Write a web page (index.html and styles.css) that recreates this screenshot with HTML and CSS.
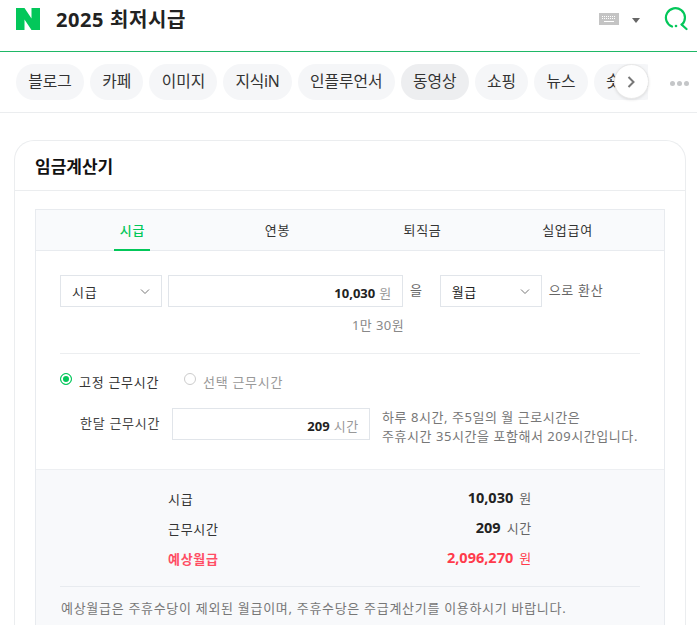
FILE: index.html
```html
<!DOCTYPE html>
<html lang="ko">

<head>
    <meta charset="utf-8" />
    <title>2025 최저시급</title>
    <link rel="stylesheet" href="styles.css">
</head>

<body>
    <!-- 검색창 -->
    <header class="search-bar">
        <svg class="logo" width="24" height="22" viewBox="0 0 24 22">
            <path fill="#03c75a" d="M0 0h8.500l7 10.500V0H24v22h-8.500l-7-10.500V22H0z" />
        </svg>
        <h1 class="query">2025 최저시급</h1>
        <svg class="kbd" width="20" height="12" viewBox="0 0 20 12">
            <rect width="20" height="12" fill="#c4c4c4" />
            <path stroke="#fff" stroke-width="1" stroke-dasharray="1 1" d="M3 3.500h14M3 5.500h14" />
            <path stroke="#fff" stroke-width="1" d="M5 8.500h10" />
        </svg>
        <span class="caret"></span>
        <svg class="search" width="24" height="24" viewBox="0 0 24 24" fill="none" stroke="#03c75a">
            <path stroke-width="2.200" stroke-linecap="round" d="M8 19.500A9.500 9.500 0 1 1 18 17.500" />
            <path stroke-width="2.200" stroke-linecap="round" d="M17.500 17.500l5 4.500" />
            <circle cx="12" cy="19" r="1.300" fill="#03c75a" stroke="none" />
        </svg>
    </header>

    <!-- 탭 메뉴 -->
    <nav class="chip-bar">
        <div class="chips">
            <a class="chip">블로그</a>
            <a class="chip">카페</a>
            <a class="chip">이미지</a>
            <a class="chip chip-narrow">지식iN</a>
            <a class="chip">인플루언서</a>
            <a class="chip chip-hover">동영상</a>
            <a class="chip">쇼핑</a>
            <a class="chip">뉴스</a>
            <a class="chip">숏텐츠</a>
        </div>
        <button class="chip-next">
            <svg width="9" height="12" viewBox="0 0 9 12" fill="none" stroke="#777" stroke-width="2">
                <path d="M1.500 1l5 5-5 5" />
            </svg>
        </button>
        <div class="more"><i></i><i></i><i></i></div>
    </nav>

    <!-- 계산기 -->
    <section class="card">
        <h2 class="card-title">임금계산기</h2>
        <div class="card-body">
            <div class="calc">
                <ul class="tabs">
                    <li class="tab active"><span>시급</span></li>
                    <li class="tab"><span>연봉</span></li>
                    <li class="tab"><span>퇴직금</span></li>
                    <li class="tab"><span>실업급여</span></li>
                </ul>

                <div class="form">
                    <div class="convert-row">
                        <div class="select select-from">시급
                            <svg width="10" height="6" viewBox="0 0 10 6" fill="none" stroke="#777"><path d="M1 .5l4 4 4-4" /></svg>
                        </div>
                        <div class="field field-wage"><b>10,030</b> <span>원</span></div>
                        <span class="word word-eul">을</span>
                        <div class="select select-to">월급
                            <svg width="10" height="6" viewBox="0 0 10 6" fill="none" stroke="#777"><path d="M1 .5l4 4 4-4" /></svg>
                        </div>
                        <span class="word">으로 환산</span>
                    </div>
                    <p class="korean-won">1만 30원</p>

                    <div class="radios">
                        <label class="radio on"><i></i>고정 근무시간</label>
                        <label class="radio"><i></i>선택 근무시간</label>
                    </div>

                    <div class="hours-row">
                        <span class="hours-label">한달 근무시간</span>
                        <div class="field field-hours"><b>209</b> <span>시간</span></div>
                        <p class="hours-help">하루 8시간, 주5일의 월 근로시간은<br>주휴시간 35시간을 포함해서 209시간입니다.</p>
                    </div>
                </div>

                <div class="summary">
                    <dl class="result">
                        <div class="result-row">
                            <dt>시급</dt>
                            <dd><b>10,030</b> 원</dd>
                        </div>
                        <div class="result-row">
                            <dt>근무시간</dt>
                            <dd><b>209</b> 시간</dd>
                        </div>
                        <div class="result-row total">
                            <dt>예상월급</dt>
                            <dd><b>2,096,270</b> 원</dd>
                        </div>
                    </dl>
                    <p class="note">예상월급은 주휴수당이 제외된 월급이며, 주휴수당은 주급계산기를 이용하시기 바랍니다.</p>
                </div>
            </div>
        </div>
    </section>
</body>
</html>
```

FILE: styles.css
```css
* {
    box-sizing: border-box;
}

html,
body {
    height: 625px;
    overflow: hidden;
}

body {
    margin: 0;
    background: #fff;
    color: #222;
    font-family: "Noto Sans", "Noto Sans CJK KR", sans-serif;
    font-size: 13px;
    letter-spacing: .7px;
}

b {
    letter-spacing: 0;
}

h1,
h2,
p,
ul,
dl,
dd {
    margin: 0;
    padding: 0;
}

ul {
    list-style: none;
}

/* 검색창 */
.search-bar {
    display: flex;
    align-items: center;
    height: 52px;
    padding: 0 9px 13px 16px;
    border-bottom: 1px solid #1fb866;
}

.logo {
    flex: none;
}

.query {
    flex: 1;
    margin: 2px 0 0 16px;
    font-size: 20px;
    font-weight: 700;
    letter-spacing: .6px;
    line-height: 26px;
    color: #222;
}

.caret {
    width: 0;
    height: 0;
    margin: 3px 24px 0 13px;
    border-top: 5px solid #666;
    border-left: 4px solid transparent;
    border-right: 4px solid transparent;
}

/* 탭 메뉴 */
.chip-bar {
    position: relative;
    height: 61px;
    padding: 12px 0 0 16px;
    border-bottom: 1px solid #ebedef;
    overflow: hidden;
}

.chips {
    display: flex;
    gap: 6px;
    width: 632px;
    overflow: hidden;
}

.chip {
    flex: none;
    height: 36px;
    padding: 0 12.200px;
    border-radius: 18px;
    background: #f5f6f8;
    font-size: 15.800px;
    letter-spacing: 0;
    line-height: 35px;
    color: #333;
}

.chip-narrow {
    letter-spacing: -.3px;
}

.chip-hover {
    background: #edeef0;
}

.chip-next {
    position: absolute;
    left: 614px;
    top: 12px;
    display: flex;
    align-items: center;
    justify-content: center;
    width: 35px;
    height: 35px;
    padding: 0;
    border: 1px solid #e8e8e8;
    border-radius: 50%;
    background: #fff;
    box-shadow: 0 1px 3px rgba(0, 0, 0, .1);
}

.more {
    position: absolute;
    left: 670px;
    top: 29px;
    display: flex;
    gap: 2px;
}

.more i {
    width: 5px;
    height: 5px;
    border-radius: 50%;
    background: #c4c6c8;
}

/* 계산기 */
.card {
    margin: 27px 11px 0 14px;
    border: 1px solid #ebedef;
    border-bottom: 0;
    border-radius: 20px 20px 0 0;
}

.card-title {
    height: 50px;
    padding: 1px 0 0 20px;
    border-bottom: 1px solid #ebedef;
    font-size: 17px;
    font-weight: 700;
    letter-spacing: 0;
    line-height: 50px;
    color: #111;
}

.card-body {
    padding: 18px 20px 0;
}

.calc {
    border: 1px solid #e8ebef;
    border-bottom: 0;
}

.tabs {
    display: flex;
    height: 41px;
    padding: 0 24px;
    background: #f9fafc;
    border-bottom: 1px solid #e8ebef;
}

.tab {
    flex: 1;
    text-align: center;
    line-height: 40px;
    color: #333;
}

.tab span {
    display: inline-block;
    height: 41px;
}

.tab.active span {
    width: 36px;
    margin-right: 1px;
    border-bottom: 2px solid #03c75a;
    color: #03c75a;
    font-weight: 500;
    text-indent: 1px;
}

.form {
    padding: 24px 24px 23px;
}

.convert-row {
    display: flex;
    align-items: flex-start;
}

.select {
    display: flex;
    align-items: center;
    justify-content: space-between;
    width: 102px;
    height: 32px;
    padding: 0 11px;
    border: 1px solid #e1e5ea;
    color: #333;
}

.select svg {
    margin-top: 1px;
}

.select-to {
    color: #222;
}

.field {
    height: 32px;
    border: 1px solid #e1e5ea;
    text-align: right;
    line-height: 34px;
    color: #999;
}

.field b {
    color: #222;
    font-weight: 700;
}

.field-wage {
    width: 235px;
    margin-left: 6px;
    padding-right: 10px;
}

.word {
    padding-top: 5px;
    margin: 0 7px;
    color: #666;
}

.word-eul {
    margin-right: 17px;
}

.korean-won {
    padding: 9px 0 0 56px;
    height: 47px;
    border-bottom: 1px solid #eceef0;
    text-align: center;
    letter-spacing: .4px;
    line-height: 18px;
    color: #888;
}

.radios {
    display: flex;
    gap: 25px;
    margin-top: 18px;
}

.radio {
    display: flex;
    align-items: center;
    gap: 7px;
    line-height: 20px;
    color: #999;
}

.radio.on {
    color: #333;
}

.radio i {
    width: 12px;
    height: 12px;
    margin-top: -6px;
    border: 1px solid #ccc;
    border-radius: 50%;
}

.radio.on i {
    border-color: #03c75a;
    background: #03c75a;
    box-shadow: inset 0 0 0 2px #fff;
}

.hours-row {
    display: flex;
    align-items: flex-start;
    margin-top: 16px;
}

.hours-label {
    width: 112px;
    padding: 5px 0 0 20px;
    color: #444;
}

.field-hours {
    width: 198px;
    padding-right: 10px;
}

.hours-help {
    margin-left: 12px;
    line-height: 19px;
    letter-spacing: .55px;
    color: #777;
}

.summary {
    padding: 13px 24px 7px;
    background: #f8f9fb;
    border-top: 1px solid #edeff2;
}

.result {
    padding: 0 108px 13px;
    border-bottom: 1px solid #e8ebef;
}

.result-row {
    display: flex;
    justify-content: space-between;
    height: 30px;
    line-height: 30px;
    color: #333;
}

.result-row dt {
    padding-top: 1px;
}

.result-row dd {
    margin-top: -1px;
    color: #666;
}

.result-row dd b {
    margin-right: 2px;
    font-size: 14.500px;
    color: #222;
}

.total dt {
    font-weight: 700;
    color: #ff4d64;
}

.total dd,
.total dd b {
    color: #ff3b4b;
}

.note {
    padding: 11px 0 0 1px;
    line-height: 20px;
    color: #777;
}
```
